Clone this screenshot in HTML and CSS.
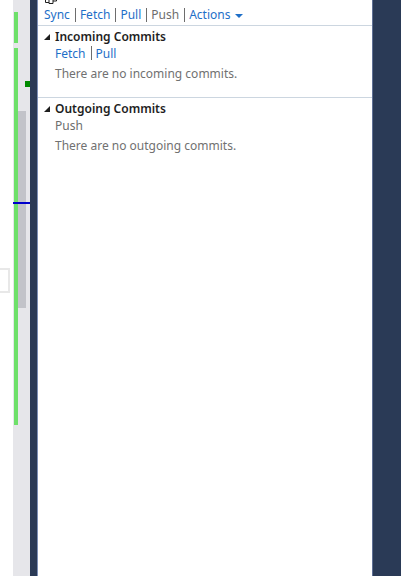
FILE: index.html
```html
<!DOCTYPE html>
<html>
<head>
<meta charset="utf-8">
<link rel="stylesheet" href="styles.css">
</head>
<body>
<div class="app">
  <div class="gutter">
    <div class="stub-box"></div>
  </div>
  <div class="scrollbar">
    <div class="mark-green m1"></div>
    <div class="mark-green m2"></div>
    <div class="thumb"></div>
    <div class="mark-dot"></div>
    <div class="mark-line"></div>
  </div>
  <div class="divider"></div>
  <div class="panel">
    <svg class="top-icon" width="14" height="6" viewBox="0 0 14 6">
      <path d="M1.5 0 V2.5 H5 M5 0 V3.5 H9 V0 M9 1 H12.5 V0" fill="none" stroke="#1e1e1e" stroke-width="1"/>
    </svg>
    <div class="toolbar">
      <a class="link">Sync</a><span class="sep"></span><a class="link">Fetch</a><span class="sep"></span><a class="link">Pull</a><span class="sep"></span><span class="muted-link">Push</span><span class="sep"></span><a class="link">Actions</a><span class="caret"></span>
    </div>
    <section class="section">
      <div class="sec-head"><span class="tri"></span><span class="sec-title">Incoming Commits</span></div>
      <div class="sec-links"><a class="link">Fetch</a><span class="sep"></span><a class="link">Pull</a></div>
      <div class="msg">There are no incoming commits.</div>
    </section>
    <section class="section">
      <div class="sec-head"><span class="tri"></span><span class="sec-title">Outgoing Commits</span></div>
      <div class="sec-links"><span class="muted-link">Push</span></div>
      <div class="msg">There are no outgoing commits.</div>
    </section>
  </div>
  <div class="rightbar"></div>
</div>
</body>
</html>
```
FILE: styles.css
```css
* { box-sizing: border-box; }
html, body { margin: 0; padding: 0; height: 100%; }
body {
  font-family: "Noto Sans", "Open Sans", sans-serif;
  font-size: 12px;
  background: #fff;
  overflow: hidden;
}
.app {
  display: flex;
  height: 576px;
  width: 401px;
}
.gutter {
  width: 13px;
  flex: none;
  background: #fff;
  position: relative;
}
.stub-box {
  position: absolute;
  left: -4px;
  top: 268px;
  width: 14px;
  height: 25px;
  border: 2px solid #e8e8e8;
  border-left: none;
}
.scrollbar {
  width: 17px;
  flex: none;
  background: #e6e6ea;
  position: relative;
}
.mark-green {
  position: absolute;
  left: 1px;
  width: 4px;
  background: #6ee06a;
}
.m1 { top: 12px; height: 31px; }
.m2 { top: 48px; height: 377px; }
.thumb {
  position: absolute;
  left: 5px;
  width: 8px;
  top: 111px;
  height: 197px;
  background: #c2c3c9;
}
.mark-dot {
  position: absolute;
  left: 12px;
  top: 81px;
  width: 5px;
  height: 6px;
  background: #008a00;
}
.mark-line {
  position: absolute;
  left: 0;
  top: 202px;
  width: 17px;
  height: 2px;
  background: #0000cc;
}
.divider {
  width: 8px;
  flex: none;
  background: #2b3a56;
  border-right: 1px solid #7d8fb6;
}
.panel {
  flex: 1;
  background: #fff;
  position: relative;
}
.rightbar {
  width: 29px;
  flex: none;
  background: #2a3a56;
  border-left: 1px solid #5f7095;
}
.top-icon {
  position: absolute;
  left: 6px;
  top: 0;
}
.toolbar {
  display: flex;
  align-items: center;
  height: 26px;
  padding: 4px 0 0 6px;
  border-bottom: 1px solid #ccd6e0;
  line-height: 16px;
}
.link { color: #1e6fc8; }
.muted-link { color: #6d6d6d; }
.sep {
  display: inline-block;
  flex: none;
  width: 1px;
  height: 14px;
  background: #6d6d6d;
  margin: 0 4px 0 5px;
}
.caret {
  display: inline-block;
  margin-left: 5px;
  width: 0;
  height: 0;
  border-left: 4px solid transparent;
  border-right: 4px solid transparent;
  border-top: 4px solid #1e6fc8;
  margin-top: 2px;
}
.section {
  padding: 2px 0 15px 6px;
  border-bottom: 1px solid #ccd6e0;
}
.section:last-child { border-bottom: none; }
.sec-head {
  display: flex;
  align-items: center;
  height: 17px;
}
.tri {
  width: 0;
  height: 0;
  border-left: 6px solid transparent;
  border-bottom: 6px solid #1e1e1e;
  margin-right: 5px;
  margin-top: 1px;
}
.sec-title {
  font-weight: 600;
  color: #1e1e1e;
}
.sec-links {
  display: flex;
  align-items: center;
  padding-left: 11px;
  height: 16px;
}
.msg {
  padding-left: 11px;
  margin-top: 5px;
  color: #717171;
  line-height: 16px;
}
```
